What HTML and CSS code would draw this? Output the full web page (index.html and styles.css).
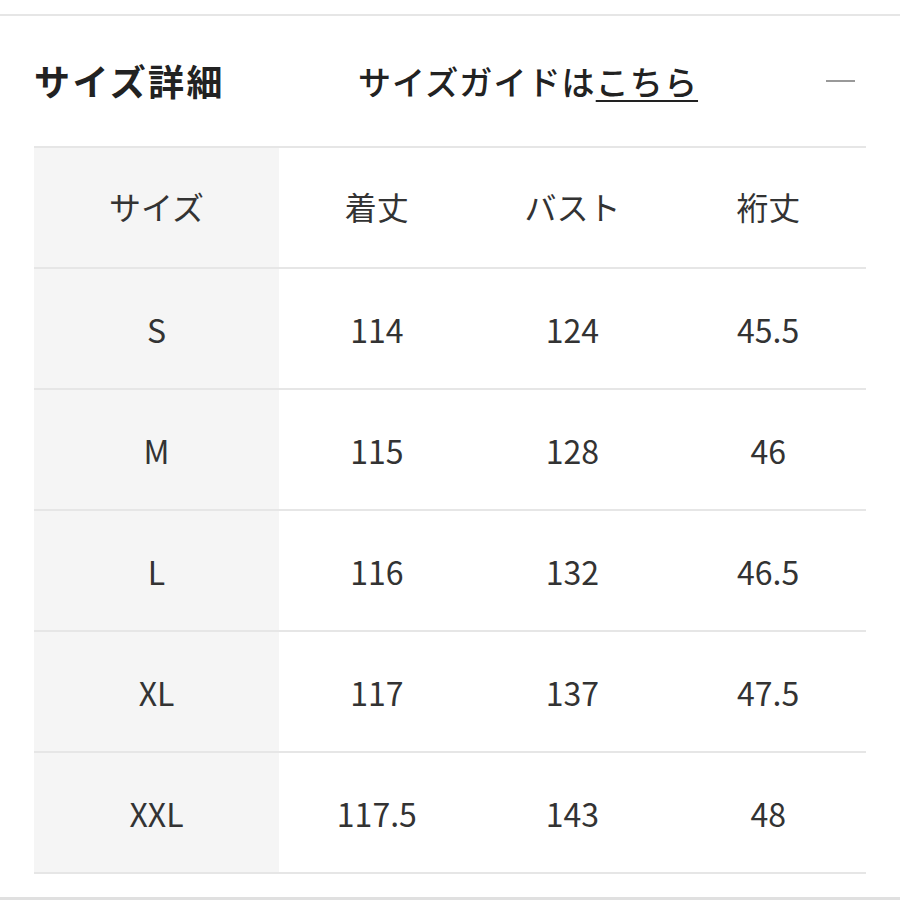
FILE: index.html
```html
<!DOCTYPE html>
<html lang="ja">
<head>
<meta charset="utf-8">
<link rel="stylesheet" href="styles.css">
</head>
<body>
<div class="page">
  <div class="rule-top"></div>
  <section class="panel">
    <header class="head">
      <h2 class="title">サイズ詳細</h2>
      <p class="guide">サイズガイドは<a class="link" href="#">こちら</a></p>
      <span class="minus"></span>
    </header>
    <div class="table">
      <div class="row head-row">
        <div class="cell first">サイズ</div>
        <div class="cell">着丈</div>
        <div class="cell">バスト</div>
        <div class="cell">裄丈</div>
      </div>
      <div class="row">
        <div class="cell first">S</div>
        <div class="cell">114</div>
        <div class="cell">124</div>
        <div class="cell">45.5</div>
      </div>
      <div class="row">
        <div class="cell first">M</div>
        <div class="cell">115</div>
        <div class="cell">128</div>
        <div class="cell">46</div>
      </div>
      <div class="row">
        <div class="cell first">L</div>
        <div class="cell">116</div>
        <div class="cell">132</div>
        <div class="cell">46.5</div>
      </div>
      <div class="row">
        <div class="cell first">XL</div>
        <div class="cell">117</div>
        <div class="cell">137</div>
        <div class="cell">47.5</div>
      </div>
      <div class="row">
        <div class="cell first">XXL</div>
        <div class="cell">117.5</div>
        <div class="cell">143</div>
        <div class="cell">48</div>
      </div>
    </div>
  </section>
  <div class="rule-bottom"></div>
</div>
</body>
</html>
```
FILE: styles.css
```css
html, body {
  margin: 0;
  padding: 0;
  background: #fff;
}
body {
  font-family: "Noto Sans CJK JP", "Noto Sans", sans-serif;
  color: #222;
  width: 900px;
  height: 900px;
  overflow: hidden;
}
.page {
  padding-top: 14px;
}
.rule-top {
  height: 2px;
  background: #e6e6e6;
}
.panel {
  padding: 0 34px;
}
.head {
  height: 130px;
  display: flex;
  align-items: center;
}
.title {
  margin: 0;
  font-size: 36px;
  font-weight: 700;
  color: #222;
  width: 324px;
  letter-spacing: 2.4px;
  padding-bottom: 2px;
}
.guide {
  margin: 0;
  font-size: 33px;
  font-weight: 500;
  color: #222;
  flex: 1;
  letter-spacing: 1.1px;
}
.link {
  color: #222;
  text-decoration: underline;
  text-decoration-thickness: 2px;
  text-underline-offset: 5px;
}
.minus {
  width: 29px;
  height: 2px;
  background: #999;
  margin-right: 11px;
  margin-top: 0;
}
.table {
  border-top: 2px solid #e6e6e6;
}
.row {
  display: grid;
  grid-template-columns: 245px 1fr 1fr 1fr;
  height: 119px;
  border-bottom: 2px solid #e6e6e6;
}
.cell {
  display: flex;
  align-items: center;
  justify-content: center;
  font-size: 32px;
  font-weight: 400;
  color: #333;
}
.head-row .cell {
  padding-bottom: 4px;
}
.first {
  background: #f5f5f5;
}
.rule-bottom {
  margin-top: 23px;
  height: 3px;
  background: #e0e0e0;
}
```
